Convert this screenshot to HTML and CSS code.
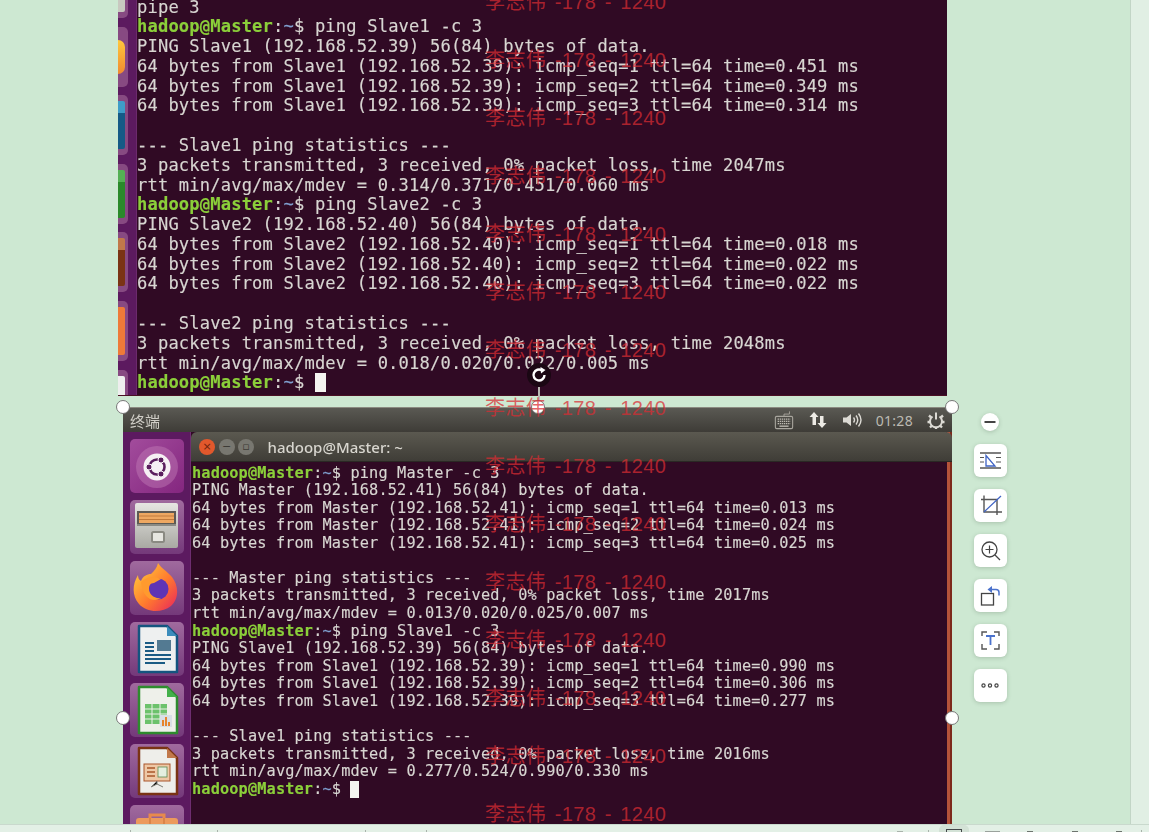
FILE: index.html
```html
<!DOCTYPE html>
<html lang="zh">
<head>
<meta charset="utf-8">
<title>hadoop ping</title>
<link rel="stylesheet" href="styles.css">
</head>
<body>
<div class="app">
  <div class="main">
    <div class="doc">
      <section class="shot-top">
        <div class="rail-top">
          <div class="tile-top tt1"><i></i></div>
          <div class="tile-top tt2"><i></i></div>
          <div class="tile-top tt3"><i></i></div>
          <div class="tile-top tt4"><i></i></div>
          <div class="tile-top tt5"><i></i></div>
          <div class="tile-top tt6"><i></i></div>
          <div class="tile-top tt7"><i></i></div>
        </div>
<pre class="term term-a">pipe 3
<b>hadoop@Master</b>:<u>~</u>$ ping Slave1 -c 3
PING Slave1 (192.168.52.39) 56(84) bytes of data.
64 bytes from Slave1 (192.168.52.39): icmp_seq=1 ttl=64 time=0.451 ms
64 bytes from Slave1 (192.168.52.39): icmp_seq=2 ttl=64 time=0.349 ms
64 bytes from Slave1 (192.168.52.39): icmp_seq=3 ttl=64 time=0.314 ms

--- Slave1 ping statistics ---
3 packets transmitted, 3 received, 0% packet loss, time 2047ms
rtt min/avg/max/mdev = 0.314/0.371/0.451/0.060 ms
<b>hadoop@Master</b>:<u>~</u>$ ping Slave2 -c 3
PING Slave2 (192.168.52.40) 56(84) bytes of data.
64 bytes from Slave2 (192.168.52.40): icmp_seq=1 ttl=64 time=0.018 ms
64 bytes from Slave2 (192.168.52.40): icmp_seq=2 ttl=64 time=0.022 ms
64 bytes from Slave2 (192.168.52.40): icmp_seq=3 ttl=64 time=0.022 ms

--- Slave2 ping statistics ---
3 packets transmitted, 3 received, 0% packet loss, time 2048ms
rtt min/avg/max/mdev = 0.018/0.020/0.022/0.005 ms
<b>hadoop@Master</b>:<u>~</u>$ <s class="cursor"> </s></pre>
      </section>

      <section class="shot-bottom">
        <header class="topbar">
          <span class="topbar-name">终端</span>
          <div class="indicators">
            <svg class="ind" width="20" height="20" viewBox="0 0 22 22"><path d="M11 7V4.500h6V1.500" fill="none" stroke="#a9a69e"/><rect x="1.500" y="7" width="19" height="13.500" rx="1.500" fill="none" stroke="#a9a69e" stroke-width="1.200"/><path d="M4 10h14M4 12.500h14M4 15h14" stroke="#bdbab2" stroke-width="1.500" stroke-dasharray="1.500 .8"/><path d="M6 17.800h10" stroke="#bdbab2" stroke-width="1.500"/></svg>
            <svg class="ind" width="20" height="20" viewBox="0 0 20 20"><path d="M6 2l4.500 5H8v8H4.500V7H1.500z" fill="#eceae4"/><path d="M14 18l-4.500-5H12V6h3.500v7h3z" fill="#eceae4"/></svg>
            <svg class="ind" width="22" height="20" viewBox="0 0 22 20"><path d="M1 7.500h3.500L9 4v12l-4.500-3.500H1z" fill="#dcdad4"/><path d="M11.500 7.500q2 2.500 0 5M14 5.500q3.500 4.500 0 9M16.500 3.500q5 6.500 0 13" fill="none" stroke="#dcdad4" stroke-width="1.400"/></svg>
            <span class="clock">01:28</span>
            <svg class="ind" width="20" height="20" viewBox="0 0 20 20"><path d="M6.500 6.500a6 6 0 1 0 7 0" fill="none" stroke="#dcdad4" stroke-width="2"/><path d="M10 2.500v7" stroke="#dcdad4" stroke-width="2"/><path d="M3 5.500l2 1.800M17 5.500l-2 1.800M1.500 12h2.500M16 12h2.500M4 17.500l2-2M16 17.500l-2-2M10 17v2" stroke="#dcdad4" stroke-width="2.400"/></svg>
          </div>
        </header>
        <div class="desktop">
          <nav class="launcher">
            <div class="tile tile-ubuntu">
              <svg width="54" height="54" viewBox="0 0 54 54"><circle cx="27" cy="28" r="21" fill="#c37fb9" opacity=".45"/><circle cx="27" cy="28" r="13.500" fill="#f6f1f4"/><circle cx="27" cy="28" r="7.500" fill="none" stroke="#5b1f5e" stroke-width="2.600"/><circle cx="19" cy="28" r="3" fill="#5b1f5e" stroke="#f6f1f4"/><circle cx="31" cy="21" r="3" fill="#5b1f5e" stroke="#f6f1f4"/><circle cx="31" cy="35" r="3" fill="#5b1f5e" stroke="#f6f1f4"/></svg>
            </div>
            <div class="tile">
              <svg width="54" height="54" viewBox="0 0 54 54"><defs><linearGradient id="bx" x1="0" y1="0" x2="0" y2="1"><stop offset="0" stop-color="#e6e6e2"/><stop offset="1" stop-color="#a9a9a3"/></linearGradient></defs><rect x="5" y="3" width="43" height="45" rx="2" fill="url(#bx)"/><rect x="7" y="11" width="39" height="14" fill="#5d5a54"/><rect x="9" y="13" width="35" height="10" fill="#eea862"/><path d="M9 16h35M9 19.500h35" stroke="#c07a3c" stroke-width="1.200"/><rect x="7" y="24" width="39" height="2" fill="#8a8a84"/><rect x="22" y="32" width="12" height="10" rx="1.500" fill="#e6e6e0" stroke="#8a8a82" stroke-width="2"/></svg>
            </div>
            <div class="tile">
              <svg width="54" height="54" viewBox="0 0 54 54"><defs><linearGradient id="fx" x1="0" y1="0" x2="1" y2="1"><stop offset="0" stop-color="#ffd83d"/><stop offset=".55" stop-color="#ff7a2e"/><stop offset="1" stop-color="#e8245d"/></linearGradient></defs><path d="M28 2c4 6 9 8 14 14 7 9 7 22-1 29-9 7-24 7-32-2C2 35 2 24 8 14c0 3 1 5 3 6 2-5 6-7 10-7 3-3 6-6 7-11z" fill="url(#fx)"/><circle cx="28" cy="28" r="10.500" fill="#5f34b5"/><path d="M11 21c6-6 14-6 20-3l-7 4c-4 0-5 3-5 6 0 5 5 10 12 9-8 5-18 1-20-16z" fill="#ff9a2e"/></svg>
            </div>
            <div class="tile">
              <svg width="54" height="54" viewBox="0 0 54 54"><path d="M9 4h28l10 10v36H9z" fill="#eef0f0" stroke="#14547f" stroke-width="2.500" stroke-linejoin="round"/><path d="M37 4l10 10H37z" fill="#3b8cbc"/><path d="M15 21h9M15 25h9M15 29h9M15 33h26M15 37h26M15 41h20" stroke="#1a5b85" stroke-width="2"/><rect x="27" y="18" width="14" height="11" fill="#537a92"/></svg>
            </div>
            <div class="tile">
              <svg width="54" height="54" viewBox="0 0 54 54"><path d="M9 4h28l10 10v36H9z" fill="#eef0ea" stroke="#2e8b2e" stroke-width="2.500" stroke-linejoin="round"/><path d="M37 4l10 10H37z" fill="#43b04a"/><path d="M15 21h22v20H15z" fill="#6cc26c"/><path d="M15 26h22M15 31h22M15 36h22M22 21v20M30 21v20" stroke="#eef0ea"/><rect x="30" y="32" width="12" height="12" fill="#d9dfe6"/><path d="M33 43v-6M36 43V34M39 43v-4" stroke="#e6842c" stroke-width="2"/></svg>
            </div>
            <div class="tile">
              <svg width="54" height="54" viewBox="0 0 54 54"><path d="M9 4h28l10 10v36H9z" fill="#eeeeea" stroke="#7a3314" stroke-width="2.500" stroke-linejoin="round"/><path d="M37 4l10 10H37z" fill="#c1784a"/><rect x="14" y="20" width="26" height="17" fill="#eec8a6" stroke="#a9552a"/><path d="M17 24h8M17 28h8M17 32h8" stroke="#a9552a" stroke-width="1.500"/><rect x="28" y="23" width="9" height="10" fill="#e4efe0" stroke="#5a8a52" stroke-width=".8"/><path d="M27 37v3l-6 3M27 40l6 3" stroke="#7a7a72"/></svg>
            </div>
            <div class="tile">
              <svg width="54" height="54" viewBox="0 0 54 54"><path d="M20 14v-4h14v4" fill="none" stroke="#e88a4c" stroke-width="3"/><rect x="6" y="13" width="42" height="36" rx="3" fill="#ec9a5c"/><path d="M20 13v36M34 13v36" stroke="#c96f34"/></svg>
            </div>
          </nav>
          <div class="window">
            <div class="titlebar">
              <span class="btn btn-close">×</span>
              <span class="btn btn-min">−</span>
              <span class="btn btn-max">▫</span>
              <span class="wintitle">hadoop@Master: ~</span>
            </div>
<pre class="term term-b"><b>hadoop@Master</b>:<u>~</u>$ ping Master -c 3
PING Master (192.168.52.41) 56(84) bytes of data.
64 bytes from Master (192.168.52.41): icmp_seq=1 ttl=64 time=0.013 ms
64 bytes from Master (192.168.52.41): icmp_seq=2 ttl=64 time=0.024 ms
64 bytes from Master (192.168.52.41): icmp_seq=3 ttl=64 time=0.025 ms

--- Master ping statistics ---
3 packets transmitted, 3 received, 0% packet loss, time 2017ms
rtt min/avg/max/mdev = 0.013/0.020/0.025/0.007 ms
<b>hadoop@Master</b>:<u>~</u>$ ping Slave1 -c 3
PING Slave1 (192.168.52.39) 56(84) bytes of data.
64 bytes from Slave1 (192.168.52.39): icmp_seq=1 ttl=64 time=0.990 ms
64 bytes from Slave1 (192.168.52.39): icmp_seq=2 ttl=64 time=0.306 ms
64 bytes from Slave1 (192.168.52.39): icmp_seq=3 ttl=64 time=0.277 ms

--- Slave1 ping statistics ---
3 packets transmitted, 3 received, 0% packet loss, time 2016ms
rtt min/avg/max/mdev = 0.277/0.524/0.990/0.330 ms
<b>hadoop@Master</b>:<u>~</u>$ <s class="cursor"> </s></pre>
          </div>
        </div>
      </section>

      <div class="rotate">
        <svg width="18" height="18" viewBox="0 0 18 18"><path d="M14.500 9A5.500 5.500 0 1 1 12 4.400" fill="none" stroke="#fff" stroke-width="2.400"/><path d="M10.500 1l5 3-4.500 3.500z" fill="#fff"/></svg>
      </div>
      <i class="stem"></i>
      <i class="handle h-tl"></i><i class="handle h-tc"></i><i class="handle h-tr"></i>
      <i class="handle h-ml"></i><i class="handle h-mr"></i>

      <aside class="tools">
        <button class="tool-min" type="button"><svg width="18" height="18" viewBox="0 0 18 18"><path d="M3.500 9h11" stroke="#444" stroke-width="2"/></svg></button>
        <button class="tool" type="button"><svg width="33" height="33" viewBox="0 0 33 33"><path d="M6 9h21M6 24h21" stroke="#555" stroke-width="1.300"/><path d="M6 13.500h4M6 18h4M22 13.500h5M22 18h5" stroke="#555"/><path d="M12 11.500v10.500h9z" fill="none" stroke="#3f63c4" stroke-width="1.300"/></svg></button>
        <button class="tool" type="button"><svg width="33" height="33" viewBox="0 0 33 33"><path d="M7 10.500h16V26M10 6.500V23h18" fill="none" stroke="#555" stroke-width="1.400"/><path d="M10 23L27 7" stroke="#3f63c4" stroke-width="1.200"/></svg></button>
        <button class="tool" type="button"><svg width="33" height="33" viewBox="0 0 33 33"><circle cx="15.500" cy="15.500" r="7.500" fill="none" stroke="#444" stroke-width="1.300"/><path d="M11.500 15.500h8M15.500 11.500v8" stroke="#444" stroke-width="1.200"/><path d="M21 21l5 5" stroke="#444" stroke-width="1.300"/></svg></button>
        <button class="tool" type="button"><svg width="33" height="33" viewBox="0 0 33 33"><rect x="7.500" y="14.500" width="12" height="11.500" fill="none" stroke="#444" stroke-width="1.300"/><path d="M25 16.500v-3q0-3-3-3h-6" fill="none" stroke="#4b72cc" stroke-width="1.500"/><path d="M18 7l-4.500 3.500L18 14z" fill="#4b72cc"/></svg></button>
        <button class="tool" type="button"><svg width="33" height="33" viewBox="0 0 33 33"><path d="M8 12V8h5M20 8h5v4M8 20v5h5M20 25h5v-5" fill="none" stroke="#555" stroke-width="1.400"/><path d="M12 12h9M16.500 12v9" stroke="#4b72cc" stroke-width="1.800"/></svg></button>
        <button class="tool" type="button"><svg width="33" height="33" viewBox="0 0 33 33"><g fill="none" stroke="#444" stroke-width="1.200"><circle cx="9.500" cy="16.500" r="1.600"/><circle cx="16" cy="16.500" r="1.600"/><circle cx="22.500" cy="16.500" r="1.600"/></g></svg></button>
      </aside>

      <div class="watermarks">
        <span>李志伟 -178 - 1240</span><span>李志伟 -178 - 1240</span><span>李志伟 -178 - 1240</span>
        <span>李志伟 -178 - 1240</span><span>李志伟 -178 - 1240</span><span>李志伟 -178 - 1240</span>
        <span>李志伟 -178 - 1240</span><span>李志伟 -178 - 1240</span><span>李志伟 -178 - 1240</span>
        <span>李志伟 -178 - 1240</span><span>李志伟 -178 - 1240</span><span>李志伟 -178 - 1240</span>
        <span>李志伟 -178 - 1240</span><span>李志伟 -178 - 1240</span><span>李志伟 -178 - 1240</span>
      </div>
    </div>
    <div class="siderail"></div>
  </div>
  <footer class="statusbar">
    <i class="sep sep-a"></i><i class="sep sep-b"></i><i class="sep sep-c"></i><i class="sep sep-d"></i>
    <i class="tip tip-a"></i>
    <i class="sep sep-e"></i>
    <span class="active-tab"><i class="tab-icon"></i></span>
    <i class="tip tip-wide"></i>
    <i class="tip tip-b"></i><i class="tip tip-c"></i><i class="tip tip-d"></i>
    <i class="sep sep-f"></i>
  </footer>
</div>
</body>
</html>
```
FILE: styles.css
```css
* { box-sizing: border-box; }
html, body { margin: 0; padding: 0; height: 832px; overflow: hidden; background: #cde8d2; }
.app { width: 1149px; height: 832px; display: flex; flex-direction: column; overflow: hidden; }
.main { flex: 1; display: flex; min-height: 0; }
.doc { position: relative; width: 1130px; padding-left: 118px; overflow: hidden; background: #cde8d2; }
.siderail { width: 19px; background: #e1efe4; border-left: 1px solid #c2d5c6; }

.statusbar { height: 8px; background: #e3f0e6; border-top: 1px solid #c9d9cd; display: flex; align-items: flex-end; }
.sep { display: block; width: 1px; height: 2px; background: #a9b3ab; flex: none; }
.sep-a { margin-left: 130px; }
.sep-b { margin-left: 86px; }
.sep-c { margin-left: 147px; }
.sep-d { margin-left: 60px; }
.sep-e { margin-left: 25px; }
.sep-f { margin-left: 19px; }
.tip { display: block; flex: none; width: 6px; height: 1px; background: #6d746e; }
.tip-a { margin-left: 470px; background: #a9b3ab; }
.active-tab { flex: none; width: 30px; height: 7px; margin-left: 10px; background: #d3e2d6; border-radius: 5px 5px 0 0; display: flex; justify-content: center; align-items: flex-end; }
.tab-icon { display: block; width: 16px; height: 3px; border: 1px solid #44484a; border-bottom: 0; }
.tip-wide { width: 15px; margin-left: 16px; background: #9aa29c; }
.tip-b { margin-left: 27px; }
.tip-c { margin-left: 39px; }
.tip-d { margin-left: 38px; }

.shot-top { width: 829px; height: 396px; display: flex; background: #300a24; border-bottom: 1px solid #4a0f24; overflow: hidden; }
.rail-top { width: 19px; flex: none; background: #5c1a5f; border-right: 1px solid #6c2a6c; display: flex; flex-direction: column; gap: 8.600px; margin-top: -42px; filter: blur(.5px); }
.tile-top { width: 10px; height: 60px; flex: none; background: #874a82; border-radius: 0 5px 5px 0; display: flex; padding: 6px 0; }
.tile-top i { display: block; width: 7px; border-radius: 0 2px 2px 0; }
.tt1 i { background: #c8c8c0; }
.tt2 i { background: linear-gradient(#ffc83c, #f08a30); border-radius: 0 8px 8px 0; margin: 7px 0; }
.tt3 i { background: linear-gradient(#3f9cc8 25%, #155a86 25%); }
.tt4 i { background: linear-gradient(#54b054 25%, #2a8a2a 25%); }
.tt5 i { background: linear-gradient(#c1784a 25%, #7a3314 25%); }
.tt6 i { background: #ee7a38; }
.tt7 i { background: #eee; }

.term { margin: 0; font-family: "DejaVu Sans Mono", monospace; color: #d8d6d2; white-space: pre; filter: blur(0.4px); -webkit-text-stroke: .15px currentColor; }
.term b { color: #8bcf3a; font-weight: 700; }
.term u { color: #7f9fcf; text-decoration: none; }
.term s { text-decoration: none; }
.cursor { display: inline-block; background: #f4f4f0; vertical-align: top; }
.term-a { flex: 1; margin-top: -2.500px; font-size: 17.100px; line-height: 19.780px; letter-spacing: .172px; }
.term-a .cursor { width: 11px; height: 19px; }
.term-b { font-size: 15.280px; line-height: 17.560px; letter-spacing: .13px; padding: 2.500px 0 0 1px; }
.term-b .cursor { width: 9px; height: 17px; }

.shot-bottom { width: 829px; height: 417px; margin: 11px 0 0 5px; display: flex; flex-direction: column; overflow: hidden; }
.topbar { height: 25px; flex: none; display: flex; align-items: center; justify-content: space-between; padding: 0 6px 0 7px; background: linear-gradient(#5a5953, #3e3c37); border-top: 1px solid #8a8a80; }
.topbar-name { font: 15px "Noto Sans CJK SC", sans-serif; color: #cfcdc6; filter: blur(.3px); }
.indicators { display: flex; align-items: center; gap: 14px; }
.ind { display: block; filter: blur(.3px); }
.clock { font: 14px "Noto Sans", sans-serif; color: #bcbab2; letter-spacing: .3px; margin: 0 -1px 0 -2px; }

.desktop { flex: 1; display: flex; min-height: 0; }
.launcher { width: 68px; flex: none; background: #5c1a60; border-right: 1px solid #6e2d70; padding: 7px 0 0 7px; display: flex; flex-direction: column; gap: 7px; overflow: hidden; }
.tile { width: 54px; height: 54px; flex: none; border-radius: 5px; background: linear-gradient(#a06a9e, #74397a); }
.tile svg { display: block; filter: blur(.4px); }
.tile-ubuntu { background: linear-gradient(135deg, #a24c9c, #84267f); }

.window { flex: 1; min-width: 0; background: #300a24; border-right: 2px solid #7d2a1c; box-shadow: inset -3px 0 0 #b5533a; }
.titlebar { height: 30px; margin-right: -2px; display: flex; align-items: center; padding-left: 8px; gap: 3.500px; background: linear-gradient(#5b5950, #3f3d37); border-radius: 6px 6px 0 0; border-bottom: 1px solid #2a2824; }
.btn { width: 16px; height: 16px; border-radius: 50%; display: flex; align-items: center; justify-content: center; font: 11px/1 "DejaVu Sans", sans-serif; color: #3d3b36; background: #7b7a72; }
.btn-close { background: #e2582c; color: #70230c; }
.btn-min, .btn-max { background: #787770; }
.wintitle { margin-left: 10px; font: 500 15px "Noto Sans", sans-serif; color: #d8d6cf; filter: blur(.3px); }

.rotate { position: absolute; left: 527px; top: 363px; width: 24px; height: 24px; border-radius: 50%; background: #1a0713; display: flex; align-items: center; justify-content: center; }
.stem { position: absolute; left: 537.500px; top: 387px; width: 2px; height: 16px; background: #b8b8b2; }
.handle { position: absolute; width: 14px; height: 14px; border-radius: 50%; background: #fff; border: 1px solid #777; }
.h-tl { left: 116px; top: 400px; }
.h-tc { left: 531px; top: 400px; }
.h-tr { left: 945px; top: 400px; }
.h-ml { left: 116px; top: 711px; }
.h-mr { left: 945px; top: 711px; }

.tools { position: absolute; left: 974px; top: 413px; width: 33px; display: flex; flex-direction: column; align-items: center; gap: 12px; }
.tool, .tool-min { border: 0; padding: 0; background: #fff; display: flex; align-items: center; justify-content: center; box-shadow: 0 1px 4px rgba(60, 80, 60, .25); }
.tool { width: 33px; height: 33px; border-radius: 6px; }
.tool-min { width: 18px; height: 18px; border-radius: 50%; margin: 0 0 1px -1px; }

.watermarks { position: absolute; left: 485px; top: -12px; display: flex; flex-direction: column; pointer-events: none; }
.watermarks span { height: 58px; font: 20px/28px "Liberation Sans", "Noto Sans CJK SC", sans-serif; letter-spacing: .4px; word-spacing: 2.500px; color: rgba(218, 44, 50, .72); white-space: nowrap; }
```
